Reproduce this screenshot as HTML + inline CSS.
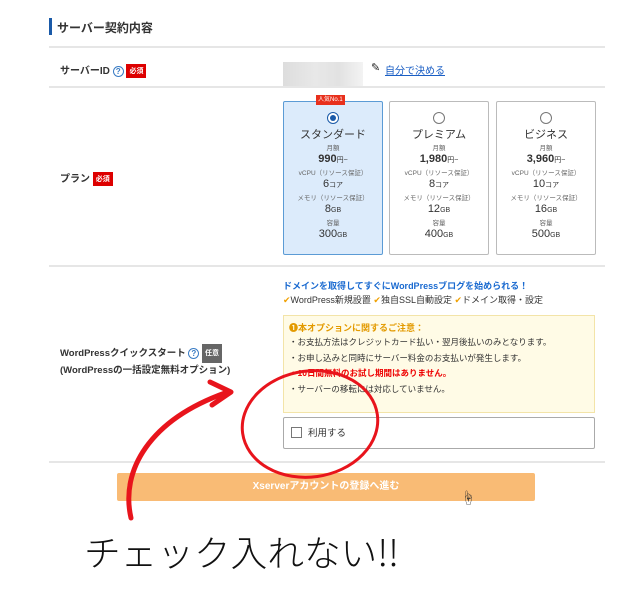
<!DOCTYPE html>
<html><head><meta charset="utf-8"><style>
*{margin:0;padding:0;box-sizing:border-box}
body{width:640px;height:600px;background:#fff;font-family:"Liberation Sans","Noto Sans CJK JP",sans-serif;color:#333;position:relative;overflow:hidden}
.a{position:absolute}
.line{position:absolute;left:49px;width:556px;height:2px;background:#e6e6e6}
.req{display:inline-block;background:#d00;color:#fff;font-size:7px;padding:2px 3px;vertical-align:middle;font-weight:bold}
.q{display:inline-block;width:11px;height:11px;border:1px solid #3a7cc4;border-radius:50%;color:#3a7cc4;font-size:8px;line-height:9px;text-align:center;vertical-align:middle}
.card{position:absolute;top:101px;width:100px;height:154px;border:1px solid #bbb;background:#fff;text-align:center;border-radius:2px}
.card.s{border-color:#5b9bd5;background:#dcebfb}
.rad{width:12px;height:12px;border:1px solid #777;border-radius:50%;margin:10px auto 4px;background:#fff;position:relative}
.s .rad{border-color:#1a5aa8}
.s .rad:after{content:"";position:absolute;left:2px;top:2px;width:6px;height:6px;border-radius:50%;background:#1a5aa8}
.nm{font-size:11px;color:#333;line-height:14px}
.sm{font-size:6.5px;color:#666;line-height:9px;margin-top:2px}
.pr{font-size:11px;font-weight:bold;line-height:13px}
.pr small,.v small{font-size:7px;font-weight:normal}
.v{font-size:11px;line-height:13px}
.bul{font-size:8.5px;line-height:15.5px}
</style></head><body>
<div class="a" style="left:49px;top:18px;width:3px;height:17px;background:#1a5aa8"></div>
<div class="a" style="left:57px;top:19px;font-size:12px;font-weight:bold;color:#333">サーバー契約内容</div>
<div class="line" style="top:46px"></div>
<div class="a" style="left:60px;top:62px;font-size:10px;font-weight:bold">サーバーID <span class="q">?</span> <span class="req">必須</span></div>
<div class="a" style="left:283px;top:62px;width:80px;height:26px;background:linear-gradient(90deg,#ddd,#e8e8e8 40%,#e2e2e2 70%,#f3f3f3)"></div>
<div class="a" style="left:371px;top:61px;font-size:11px;color:#222">✎</div>
<div class="a" style="left:385px;top:62px;font-size:10px;color:#1a5ec4;text-decoration:underline">自分で決める</div>
<div class="line" style="top:86px"></div>
<div class="a" style="left:60px;top:170px;font-size:10px;font-weight:bold">プラン <span class="req">必須</span></div>
<div class="card s" style="left:283px"><div class="rad"></div><div class="nm">スタンダード</div><div class="sm">月額</div><div class="pr">990<small>円~</small></div><div class="sm">vCPU（リソース保証）</div><div class="v">6<small>コア</small></div><div class="sm">メモリ（リソース保証）</div><div class="v">8<small>GB</small></div><div class="sm">容量</div><div class="v">300<small>GB</small></div></div>
<div class="a" style="left:316px;top:95px;background:#e8301c;color:#fff;font-size:6px;padding:1px 2px;line-height:8px">人気No.1</div>
<div class="card" style="left:389px"><div class="rad"></div><div class="nm">プレミアム</div><div class="sm">月額</div><div class="pr">1,980<small>円~</small></div><div class="sm">vCPU（リソース保証）</div><div class="v">8<small>コア</small></div><div class="sm">メモリ（リソース保証）</div><div class="v">12<small>GB</small></div><div class="sm">容量</div><div class="v">400<small>GB</small></div></div>
<div class="card" style="left:496px"><div class="rad"></div><div class="nm">ビジネス</div><div class="sm">月額</div><div class="pr">3,960<small>円~</small></div><div class="sm">vCPU（リソース保証）</div><div class="v">10<small>コア</small></div><div class="sm">メモリ（リソース保証）</div><div class="v">16<small>GB</small></div><div class="sm">容量</div><div class="v">500<small>GB</small></div></div>
<div class="line" style="top:265px"></div>
<div class="a" style="left:283px;top:279px;font-size:9px;color:#1a6ad0;font-weight:bold">ドメインを取得してすぐにWordPressブログを始められる！</div>
<div class="a" style="left:283px;top:293px;font-size:9px;color:#333"><span style="color:#f0a000">✔</span>WordPress新規設置 <span style="color:#f0a000">✔</span>独自SSL自動設定 <span style="color:#f0a000">✔</span>ドメイン取得・設定</div>
<div class="a" style="left:60px;top:344px;font-size:9.5px;font-weight:bold;line-height:15px">WordPressクイックスタート <span class="q">?</span> <span class="req" style="background:#666">任意</span><br>(WordPressの一括設定無料オプション)</div>
<div class="a" style="left:283px;top:315px;width:312px;height:98px;background:#fffbe6;border:1px solid #f3e4a8;padding:5px 5px">
<div style="font-size:9px;color:#e39a00;font-weight:bold;line-height:14px">❶本オプションに関するご注意：</div>
<div class="bul">・お支払方法はクレジットカード払い・翌月後払いのみとなります。</div>
<div class="bul">・お申し込みと同時にサーバー料金のお支払いが発生します。</div>
<div class="bul" style="color:#e00;font-weight:bold">・10日間無料のお試し期間はありません。</div>
<div class="bul">・サーバーの移転には対応していません。</div>
</div>
<div class="a" style="left:283px;top:417px;width:312px;height:32px;border:1px solid #aaa;border-radius:2px"></div>
<div class="a" style="left:291px;top:427px;width:11px;height:11px;border:1px solid #777;background:#fff"></div>
<div class="a" style="left:308px;top:425px;font-size:9.5px">利用する</div>
<div class="line" style="top:461px"></div>
<div class="a" style="left:117px;top:473px;width:418px;height:28px;background:#f9bb75;border-radius:2px;color:#fff;font-size:10px;font-weight:bold;text-align:center;line-height:28px">Xserverアカウントの登録へ進む</div>
<div class="a" style="left:461px;top:488px;font-size:14px;color:#333">☝</div>
<svg class="a" style="left:0;top:0" width="640" height="600">
<ellipse cx="310" cy="424" rx="68" ry="53" fill="none" stroke="#e8141c" stroke-width="3" transform="rotate(-8 310 424)"/>
<path d="M131 518 C120 470 150 420 225 393" fill="none" stroke="#e8141c" stroke-width="5" stroke-linecap="round"/>
<path d="M210 382 L231 392 L212 405" fill="none" stroke="#e8141c" stroke-width="5" stroke-linecap="round" stroke-linejoin="round"/>
<text x="84" y="566" font-family="'Noto Sans CJK JP',sans-serif" font-weight="300" font-size="36" fill="#111" textLength="315" lengthAdjust="spacingAndGlyphs">チェック入れない!!</text>
</svg>
</body></html>
